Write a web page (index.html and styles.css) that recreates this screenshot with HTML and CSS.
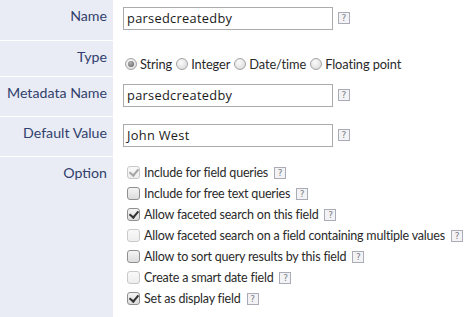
FILE: index.html
```html
<!DOCTYPE html>
<html>
<head>
<meta charset="utf-8">
<link rel="stylesheet" href="styles.css">
</head>
<body>
<div class="form">
  <div class="label r-name">Name</div>
  <div class="field r-name"><span class="text">parsedcreatedby</span><span class="help">?</span></div>

  <div class="label r-type">Type</div>
  <div class="field r-type radios">
    <span class="radio checked"></span><span class="rlabel">String</span>
    <span class="radio"></span><span class="rlabel">Integer</span>
    <span class="radio"></span><span class="rlabel">Date/time</span>
    <span class="radio"></span><span class="rlabel">Floating point</span>
  </div>

  <div class="label r-meta">Metadata Name</div>
  <div class="field r-meta"><span class="text">parsedcreatedby</span><span class="help">?</span></div>

  <div class="label r-def">Default Value</div>
  <div class="field r-def"><span class="text">John West</span><span class="help">?</span></div>

  <div class="label r-opt">Option</div>
  <div class="field r-opt options">
    <div class="opt"><span class="cb checked disabled"></span><span class="olabel">Include for field queries</span><span class="help">?</span></div>
    <div class="opt"><span class="cb"></span><span class="olabel">Include for free text queries</span><span class="help">?</span></div>
    <div class="opt"><span class="cb checked"></span><span class="olabel">Allow faceted search on this field</span><span class="help">?</span></div>
    <div class="opt"><span class="cb disabled"></span><span class="olabel">Allow faceted search on a field containing multiple values</span><span class="help">?</span></div>
    <div class="opt"><span class="cb"></span><span class="olabel">Allow to sort query results by this field</span><span class="help">?</span></div>
    <div class="opt"><span class="cb disabled"></span><span class="olabel">Create a smart date field</span><span class="help">?</span></div>
    <div class="opt"><span class="cb checked"></span><span class="olabel">Set as display field</span><span class="help">?</span></div>
  </div>
</div>
</body>
</html>
```
FILE: styles.css
```css
html, body {
  margin: 0;
  padding: 0;
  background: #fff;
}
body {
  font-family: "Lato", "Open Sans", sans-serif;
  color: #333;
  overflow: hidden;
}
.form {
  display: grid;
  grid-template-columns: 113px 1fr;
  grid-template-rows: 40px 35px 39px 39px 1fr;
  row-gap: 1px;
  height: 317px;
}
.label {
  background: #e9ecf5;
  text-align: right;
  padding: 6px 6px 0 0;
  font-size: 14.2px;
  line-height: 20px;
  color: #31406c;
  white-space: nowrap;
}
.field {
  padding: 7px 0 0 10px;
  display: flex;
  align-items: flex-start;
}
.text {
  box-sizing: border-box;
  width: 210px;
  height: 23px;
  border: 1px solid #ababab;
  font-family: "Open Sans", sans-serif;
  font-size: 12.8px;
  letter-spacing: 0.3px;
  line-height: 21px;
  padding-left: 3px;
  color: #1a1a1a;
}
.help {
  display: inline-block;
  box-sizing: border-box;
  width: 12px;
  height: 12px;
  border: 1px solid #a9acb6;
  background: #f3f3f5;
  color: #7a7d86;
  font-size: 9px;
  line-height: 10px;
  text-align: center;
  margin: 5px 0 0 5px;
  font-family: "DejaVu Sans", sans-serif;
}
.radios {
  padding: 11px 0 0 12px;
  align-items: center;
  font-size: 12.8px;
  letter-spacing: -0.1px;
  line-height: 14px;
  color: #2a2a2a;
}
.radio {
  box-sizing: border-box;
  width: 12px;
  height: 12px;
  border-radius: 50%;
  border: 1px solid #a3a3a3;
  background: radial-gradient(circle at 40% 35%, #fbfbfb 0, #e4e4e4 60%, #d4d4d4 100%);
  margin-right: 3px;
  position: relative;
  flex: none;
}
.radio.checked::after {
  content: "";
  position: absolute;
  left: 2px;
  top: 2px;
  width: 6px;
  height: 6px;
  border-radius: 50%;
  background: radial-gradient(circle at 40% 35%, #b5b5b5 0, #6a6a6a 80%);
}
.rlabel {
  margin-right: 4px;
}
.options {
  flex-direction: column;
  padding: 5px 0 0 14px;
}
.opt {
  display: flex;
  align-items: center;
  height: 21px;
  font-size: 12.5px;
  letter-spacing: -0.2px;
  color: #2a2a2a;
  white-space: nowrap;
}
.opt .help {
  margin: 0 0 0 6px;
}
.cb {
  box-sizing: border-box;
  width: 13px;
  height: 13px;
  border: 1px solid #8f8f8f;
  border-radius: 3px;
  background: linear-gradient(#f4f4f4, #dcdcdc);
  margin-right: 4px;
  position: relative;
  flex: none;
}
.cb.disabled {
  border-color: #c9c9c9;
  background: linear-gradient(#f9f9f9, #eeeeee);
}
.cb.checked::after {
  content: "";
  position: absolute;
  left: 3px;
  top: 0px;
  width: 4px;
  height: 7px;
  border: solid #333;
  border-width: 0 2px 2px 0;
  transform: rotate(40deg);
}
.cb.checked.disabled::after {
  border-color: #a5a5a5;
}
```
